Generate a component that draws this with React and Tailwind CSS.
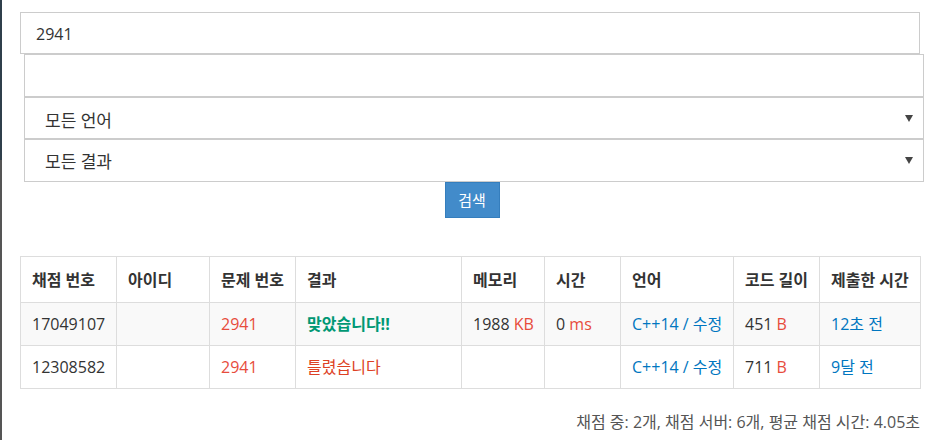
const font = { fontFamily: '"Open Sans", "Noto Sans CJK KR", sans-serif' };

const cols = [96, 93, 86, 166, 83, 76, 113, 86, 101];
const heads = ["채점 번호", "아이디", "문제 번호", "결과", "메모리", "시간", "언어", "코드 길이", "제출한 시간"];

const rows = [
  {
    id: "17049107",
    problem: "2941",
    result: "맞았습니다!!",
    ok: true,
    memory: "1988",
    time: "0",
    lang: "C++14",
    length: "451",
    when: "12초 전",
  },
  {
    id: "12308582",
    problem: "2941",
    result: "틀렸습니다",
    ok: false,
    memory: "",
    time: "",
    lang: "C++14",
    length: "711",
    when: "9달 전",
  },
];

const Arrow = () => (
  <svg width="8" height="7" viewBox="0 0 8 7" className="mr-[6px]">
    <path d="M0 0H8L4 7Z" fill="#444" />
  </svg>
);

const Select = ({ label, tall }) => (
  <div
    className={`flex items-center justify-between border border-[#ccc] pl-[20px] pr-[4px] text-[17px] text-[#333] ${
      tall ? "h-[43px]" : "h-[42px]"
    }`}
  >
    <span className={tall ? "mt-[2px]" : "mt-[6px]"}>{label}</span>
    <Arrow />
  </div>
);

const cell = "border border-[#ddd] px-[11px] whitespace-nowrap";

export default function App() {
  return (
    <div className="flex w-[930px] h-[440px] bg-white overflow-hidden" style={font}>
      <div className="flex flex-col w-[2px]">
        <div className="h-[160px] bg-[#2f3f4b]"></div>
        <div className="flex-1 bg-[#555]"></div>
      </div>

      <div className="pl-[18px]">
        <div className="mt-[12px] w-[900px] h-[42px] border border-[#ccc] flex items-center pl-[15px] pt-[2px] text-[16px] text-[#333]">
          2941
        </div>

        <div className="ml-[4px] w-[900px]">
          <div className="h-[43px] border border-[#ccc]"></div>
          <Select label="모든 언어" />
          <Select label="모든 결과" tall />
        </div>

        <div className="flex justify-center w-[904px]">
          <button className="w-[55px] h-[36px] bg-[#428bca] border border-[#357ebd] text-white text-[15px]">
            검색
          </button>
        </div>

        <table className="mt-[38px] w-[900px] table-fixed border-collapse text-[16px] text-[#333]">
          <colgroup>
            {cols.map((w, i) => (
              <col key={i} style={{ width: w }} />
            ))}
          </colgroup>
          <thead>
            <tr className="h-[46px]">
              {heads.map((h) => (
                <th key={h} className={`${cell} text-left font-bold`}>
                  {h}
                </th>
              ))}
            </tr>
          </thead>
          <tbody>
            {rows.map((r, i) => (
              <tr key={r.id} className={`h-[43px] ${i === 0 ? "bg-[#f9f9f9]" : "bg-white"}`}>
                <td className={cell}>{r.id}</td>
                <td className={cell}></td>
                <td className={`${cell} text-[#e74c3c]`}>{r.problem}</td>
                <td className={`${cell} ${r.ok ? "text-[#009874] font-bold" : "text-[#dd4124]"}`}>
                  {r.result}
                </td>
                <td className={cell}>
                  {r.memory && (
                    <>
                      {r.memory} <span className="text-[#e74c3c]">KB</span>
                    </>
                  )}
                </td>
                <td className={cell}>
                  {r.time && (
                    <>
                      {r.time} <span className="text-[#e74c3c]">ms</span>
                    </>
                  )}
                </td>
                <td className={`${cell} text-[#0076c0]`}>{r.lang} / 수정</td>
                <td className={cell}>
                  {r.length} <span className="text-[#e74c3c]">B</span>
                </td>
                <td className={`${cell} text-[#0076c0]`}>{r.when}</td>
              </tr>
            ))}
          </tbody>
        </table>

        <div className="mt-[21px] w-[900px] text-right text-[16px] text-[#555]">
          채점 중: 2개, 채점 서버: 6개, 평균 채점 시간: 4.05초
        </div>
      </div>
    </div>
  );
}
